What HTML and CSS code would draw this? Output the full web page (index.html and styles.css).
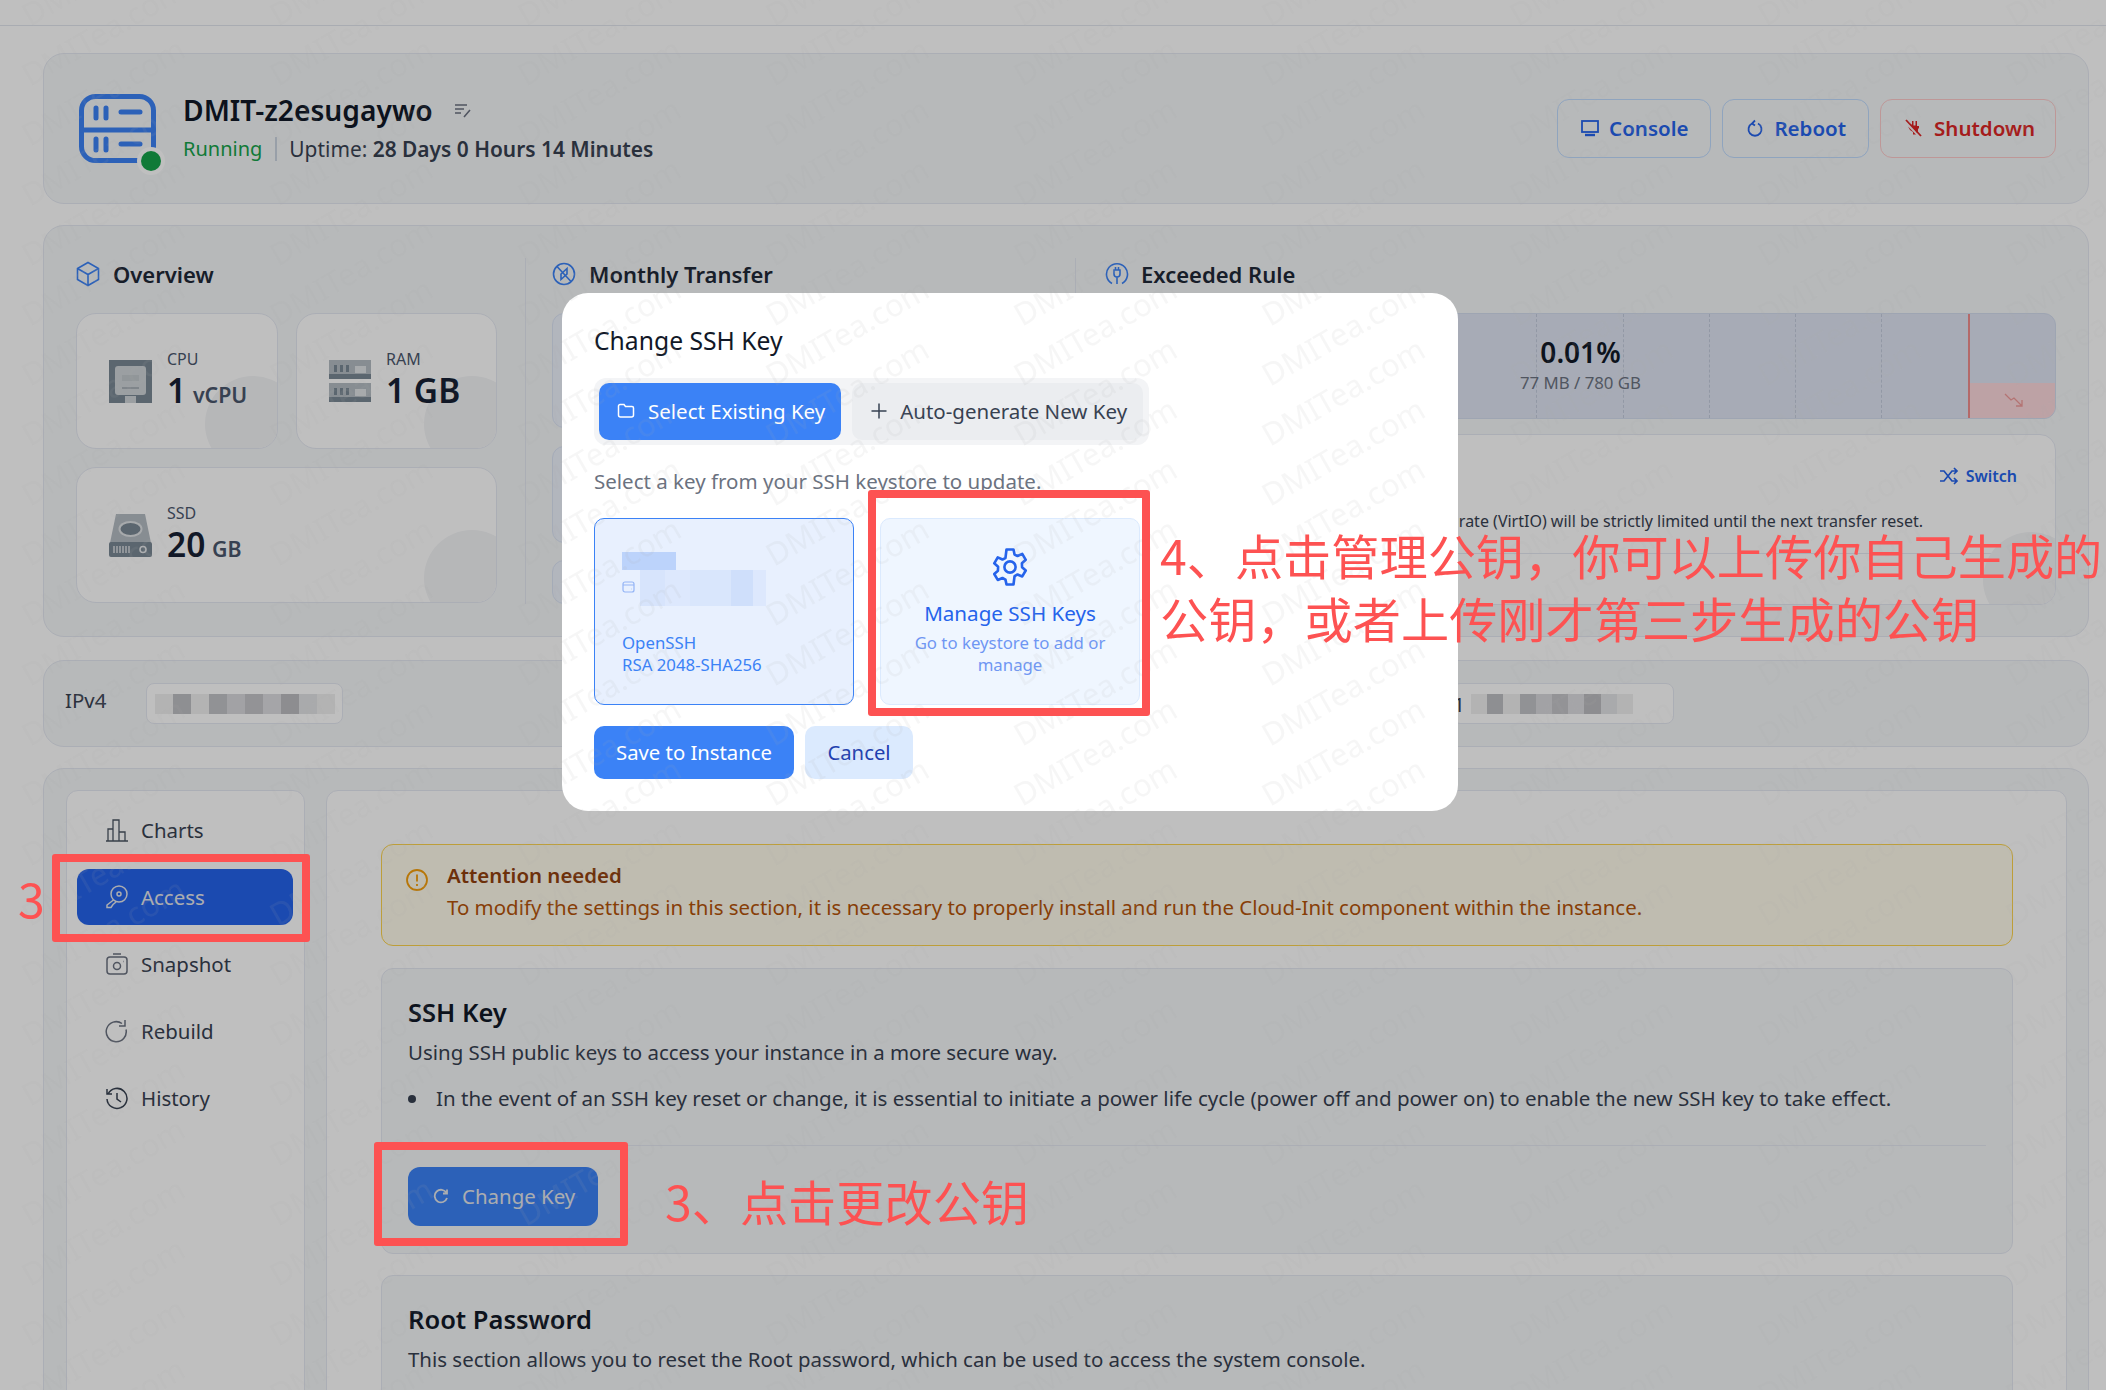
FILE: index.html

```html
<!DOCTYPE html>
<html lang="en">
<head>
<meta charset="utf-8">
<title>DMIT-z2esugaywo</title>
<link rel="stylesheet" href="styles.css">
</head>
<body>
<div class="page">
  <div class="topbar"></div>

  <section class="card head">
    <div class="logo">
      <svg width="77" height="69" viewBox="0 0 77 69" fill="none" stroke="#3b82f6" stroke-width="5" stroke-linecap="round">
        <rect x="2.5" y="2.5" width="72" height="64" rx="14"/>
        <path d="M2.5 36h72M17 14v10M27 14v10M42 18h19M17 45v11M27 45v11M42 50h19"/>
      </svg>
      <span class="logo-dot"></span>
    </div>
    <div class="head-info">
      <div class="name-row">
        <span class="name">DMIT-z2esugaywo</span>
        <svg class="edit" width="20" height="20" viewBox="0 0 20 20" fill="none" stroke="#6b7280" stroke-width="1.6"><path d="M2 5h12M2 9h9M2 13h6M11 17l6-7"/></svg>
      </div>
      <div class="status-row">
        <span class="running">Running</span>
        <span class="status-sep"></span>
        <span class="uptime">Uptime: <b>28 Days 0 Hours 14 Minutes</b></span>
      </div>
    </div>
    <div class="head-actions">
      <button class="act act-blue">
        <svg width="18" height="18" viewBox="0 0 18 18" fill="none" stroke="#2563eb" stroke-width="1.8"><rect x="1" y="2" width="16" height="11"/><path d="M4 16h10" stroke-width="2.4"/></svg>
        Console
      </button>
      <button class="act act-blue">
        <svg width="18" height="18" viewBox="0 0 18 18" fill="none" stroke="#2563eb" stroke-width="1.8"><path d="M6 4.500a6.500 6.500 0 1 0 6 0M9 1.500l-3 3 3 2"/></svg>
        Reboot
      </button>
      <button class="act act-red">
        <svg width="20" height="20" viewBox="0 0 20 20"><path d="M6 5l2 2V3h1.500v4.500h2V3H13v5h2v2l-1 1v3l-1 1zM4 8.500l8 8H9v-2.500L6 12z" fill="#dc2626"/><path d="M2 2l15 16" stroke="#dc2626" stroke-width="1.800"/></svg>
        Shutdown
      </button>
    </div>
  </section>

  <section class="card overview">
    <div class="col col-overview">
      <h3 class="col-title">
        <svg width="24" height="26" viewBox="0 0 24 26" fill="none" stroke="#3b82f6" stroke-width="1.600"><path d="M12 1.500l10.500 6v11l-10.500 6-10.500-6v-11zM1.500 7.500L12 13.500l10.500-6M12 13.500v11"/></svg>
        Overview
      </h3>
      <div class="stats">
        <div class="stat">
          <svg width="43" height="43" viewBox="0 0 43 43"><rect width="43" height="43" fill="#7a8894"/><rect x="6" y="6" width="31" height="29" rx="3" fill="#cfd4d8"/><rect x="13" y="27" width="17" height="2" fill="#aab2b8"/><rect x="16" y="36" width="11" height="7" fill="#cfd4d8"/><rect x="13" y="15" width="17" height="6" fill="#c2c8cd"/></svg>
          <div class="stat-text"><div class="stat-label">CPU</div><div class="stat-value">1 <small>vCPU</small></div></div>
        </div>
        <div class="stat">
          <svg width="42" height="43" viewBox="0 0 42 43"><g id="ramstick"><rect width="42" height="14" fill="#b4bcc3"/><rect y="14" width="42" height="5" fill="#7a8894"/><rect x="5" y="5" width="3" height="7" fill="#7a8894"/><rect x="11" y="5" width="3" height="7" fill="#7a8894"/><rect x="17" y="5" width="3" height="7" fill="#7a8894"/><rect x="26" y="6" width="11" height="7" fill="#dfe3e6"/></g><use href="#ramstick" y="23"/></svg>
          <div class="stat-text"><div class="stat-label">RAM</div><div class="stat-value">1 GB</div></div>
        </div>
        <div class="stat stat-wide">
          <svg width="43" height="43" viewBox="0 0 43 43"><path d="M7 0h29l6 29H1z" fill="#b4bcc3"/><ellipse cx="21.500" cy="15" rx="12" ry="8" fill="#dfe3e6"/><ellipse cx="21.500" cy="15" rx="10" ry="6" fill="#7a8894"/><rect y="28" width="43" height="15" rx="2" fill="#7a8894"/><path d="M5 32v7M8 32v7M11 32v7M14 32v7M17 32v7M20 32v7" stroke="#e6e9eb" stroke-width="1.300"/><circle cx="34" cy="35.500" r="3" fill="none" stroke="#e6e9eb" stroke-width="1.600"/></svg>
          <div class="stat-text"><div class="stat-label">SSD</div><div class="stat-value">20 <small>GB</small></div></div>
        </div>
      </div>
    </div>

    <div class="col col-transfer">
      <h3 class="col-title">
        <svg width="24" height="24" viewBox="0 0 24 24" fill="none" stroke="#3b82f6" stroke-width="1.600"><circle cx="12" cy="12" r="10.500"/><path d="M5 4.500l14 15M8.500 12.500l6.500-6v6M15.500 11.500l-6.500 6v-6"/></svg>
        Monthly Transfer
      </h3>
      <div class="peek peek-1"></div>
      <div class="peek peek-2"></div>
      <div class="peek peek-3"></div>
    </div>

    <div class="col col-rule">
      <h3 class="col-title">
        <svg width="24" height="24" viewBox="0 0 24 24" fill="none" stroke="#3b82f6" stroke-width="1.600"><path d="M7 21.500a10.500 10.500 0 1 1 10 0"/><path d="M9 8v4a3 3 0 0 0 6 0V8zM10.500 5v3M13.500 5v3M12 15v7" /></svg>
        Exceeded Rule
      </h3>
      <div class="gauge">
        <div class="gauge-seg"></div><div class="gauge-seg"></div><div class="gauge-seg"></div><div class="gauge-seg"></div><div class="gauge-seg"></div><div class="gauge-seg"></div><div class="gauge-seg"></div><div class="gauge-seg"></div><div class="gauge-seg"></div><div class="gauge-seg"></div>
        <div class="gauge-limit">
          <svg width="20" height="16" viewBox="0 0 20 16" fill="none" stroke="#f09a9a" stroke-width="1.300"><path d="M1 2l6 6 3-2 8 8M18 8v6h-6"/></svg>
        </div>
        <div class="gauge-text"><b>0.01%</b><span>77 MB / 780 GB</span></div>
      </div>
      <div class="rule">
        <span class="circle"></span>
        <div class="rule-switch">
          <svg width="20" height="18" viewBox="0 0 20 18" fill="none" stroke="#2563eb" stroke-width="1.700"><path d="M1 4h4l8 10h5M1 14h4l8-10h5M15 1l3 3-3 3M15 11l3 3-3 3"/></svg>
          Switch
        </div>
        <p class="rule-text">Beyond this limit, the network rate (VirtIO) will be strictly limited until the next transfer reset.</p>
        <div class="rule-line"></div>
      </div>
    </div>
  </section>

  <section class="card ips">
    <span class="ip-label">IPv4</span>
    <div class="ip-box"><span class="mosaic"></span></div>
    <div class="ip-box ip-box-2">1<span class="mosaic mosaic-2"></span></div>
  </section>

  <section class="card main">
    <nav class="side">
      <a class="side-item">
        <svg width="24" height="24" viewBox="0 0 24 24" fill="none" stroke="#4b5563" stroke-width="1.300"><path d="M1 23h22M3 23V11h5v12M8 23V2h6v21M14 23v-9h6v9"/></svg>
        Charts
      </a>
      <a class="side-item active">
        <svg width="24" height="24" viewBox="0 0 24 24" fill="none" stroke="#e5e7eb" stroke-width="1.500"><circle cx="14" cy="9" r="8"/><circle cx="14" cy="9" r="2"/><path d="M8.500 15L2 20v2.500h4l2-3 3-2.500"/></svg>
        Access
      </a>
      <a class="side-item">
        <svg width="24" height="24" viewBox="0 0 24 24" fill="none" stroke="#6b7280" stroke-width="1.500"><rect x="2" y="5" width="20" height="17" rx="3"/><circle cx="12" cy="14" r="3.500"/><path d="M8 2h8M18 9.500h.5"/></svg>
        Snapshot
      </a>
      <a class="side-item">
        <svg width="24" height="24" viewBox="0 0 24 24" fill="none" stroke="#6b7280" stroke-width="1.500"><path d="M17 4.500a10 10 0 1 0 4 6M20 1v6h-6"/></svg>
        Rebuild
      </a>
      <a class="side-item">
        <svg width="24" height="24" viewBox="0 0 24 24" fill="none" stroke="#374151" stroke-width="1.500"><path d="M3 8a10 10 0 1 1-1 5M2 3v5h5M12 7v6l4 3"/></svg>
        History
      </a>
    </nav>

    <div class="content">
      <div class="alert">
        <svg width="24" height="24" viewBox="0 0 24 24" fill="none" stroke="#f59e0b" stroke-width="1.800"><circle cx="12" cy="12" r="10"/><path d="M12 6.500v7M12 16v2"/></svg>
        <div>
          <div class="alert-title">Attention needed</div>
          <div class="alert-text">To modify the settings in this section, it is necessary to properly install and run the Cloud-Init component within the instance.</div>
        </div>
      </div>

      <div class="panel">
        <h4 class="panel-title">SSH Key</h4>
        <p class="panel-desc">Using SSH public keys to access your instance in a more secure way.</p>
        <ul class="panel-list">
          <li>In the event of an SSH key reset or change, it is essential to initiate a power life cycle (power off and power on) to enable the new SSH key to take effect.</li>
        </ul>
        <div class="panel-line"></div>
        <button class="change-btn">
          <svg width="16" height="16" viewBox="0 0 16 16" fill="none" stroke="#e5e7eb" stroke-width="1.800"><path d="M13.500 5A6.300 6.300 0 1 0 14 10M14 1.500V5.500h-4"/></svg>
          Change Key
        </button>
      </div>

      <div class="panel">
        <h4 class="panel-title">Root Password</h4>
        <p class="panel-desc">This section allows you to reset the Root password, which can be used to access the system console.</p>
      </div>
    </div>
  </section>
</div>

<div class="overlay"></div>

<div class="modal">
  <h2 class="modal-title">Change SSH Key</h2>
  <div class="tabs">
    <button class="tab tab-on">
      <svg width="18" height="18" viewBox="0 0 18 18" fill="none" stroke="#fff" stroke-width="1.500"><path d="M1.500 4a1.500 1.500 0 0 1 1.500-1.500h4l1.500 2h6.500a1.500 1.500 0 0 1 1.500 1.500v7a2 2 0 0 1-2 2h-11a2 2 0 0 1-2-2z"/></svg>
      Select Existing Key
    </button>
    <button class="tab">
      <svg width="18" height="18" viewBox="0 0 18 18" fill="none" stroke="#374151" stroke-width="1.500"><path d="M9 1.500v15M1.500 9h15"/></svg>
      Auto-generate New Key
    </button>
  </div>
  <p class="modal-desc">Select a key from your SSH keystore to update.</p>
  <div class="key-grid">
    <div class="key-card">
      <div class="key-mosaic">
        <svg width="13" height="12" viewBox="0 0 13 12" fill="none" stroke="#93b4f5" stroke-width="1.200"><rect x="1" y="1" width="11" height="10" rx="2"/><path d="M1 4h11M9 8h.5"/></svg>
      </div>
      <div class="key-meta">OpenSSH<br>RSA 2048-SHA256</div>
    </div>
    <div class="key-card key-manage">
      <svg width="42" height="42" viewBox="0 0 24 24" fill="none" stroke="#2563eb" stroke-width="1.500" stroke-linejoin="round"><path d="M10 2h4l.6 2.900 1.700.8 2.700-1.200 2 3.400-2.200 2 .1 2.200 2.100 1.900-2 3.400-2.700-1.100-1.700.9L14 22h-4l-.6-2.800-1.700-.9-2.700 1.100-2-3.400 2.100-1.900.1-2.200-2.200-2 2-3.400 2.700 1.200 1.700-.8z"/><circle cx="12" cy="12" r="3.200"/></svg>
      <div class="manage-title">Manage SSH Keys</div>
      <div class="manage-sub">Go to keystore to add or manage</div>
    </div>
  </div>
  <div class="modal-btns">
    <button class="btn-save">Save to Instance</button>
    <button class="btn-cancel">Cancel</button>
  </div>
</div>

<!-- watermark sits over both the page and the dialog -->
<svg class="watermark" width="2106" height="1390">
  <defs>
    <pattern id="wm" width="248" height="60" patternUnits="userSpaceOnUse">
      <g font-family="Noto Sans" font-size="31" fill="#aaaaaa" fill-opacity=".1">
        <text x="30" y="27" transform="rotate(-30 30 27)">DMITea.com</text>
        <text x="30" y="87" transform="rotate(-30 30 87)">DMITea.com</text>
        <text x="30" y="147" transform="rotate(-30 30 147)">DMITea.com</text>
        <text x="30" y="207" transform="rotate(-30 30 207)">DMITea.com</text>
      </g>
    </pattern>
  </defs>
  <rect width="2106" height="1390" fill="url(#wm)"/>
</svg>

<div class="mark mark-access"></div>
<div class="mark mark-change"></div>
<div class="mark mark-manage"></div>
<div class="note note-side">3</div>
<div class="note note-change">3、点击更改公钥</div>
<div class="note note-manage">4、点击管理公钥，你可以上传你自己生成的<br>公钥，或者上传刚才第三步生成的公钥</div>
</body>
</html>
```

FILE: styles.css

```css
* {
    box-sizing: border-box;
}
html, body {
    margin: 0;
    padding: 0;
    height: 1390px;
    overflow: hidden;
    background: #fff;
}
body {
    position: relative;
    font-family: "Noto Sans", "Noto Sans CJK SC", sans-serif;
    font-size: 20.45px;
    color: #374151;
}
button {
    font-family: inherit;
    cursor: pointer;
}
h2, h3, h4, p, ul {
    margin: 0;
    padding: 0;
}

.page {
    height: 1390px;
    padding: 0 17px 0 43px;
    overflow: hidden;
}
.topbar {
    height: 26px;
    margin: 0 -17px 0 -43px;
    border-bottom: 1px solid #e2e6ee;
}
.card {
    background: #f5f7f9;
    border: 1px solid #e5e9f2;
    border-radius: 21px;
}

/* header */
.head {
    display: flex;
    align-items: center;
    height: 151px;
    margin-top: 27px;
    padding: 0 32px 0 35px;
}
.logo {
    position: relative;
    width: 77px;
    height: 69px;
    margin-right: 27px;
}
.logo-dot {
    position: absolute;
    right: -5px;
    bottom: -8px;
    width: 20px;
    height: 20px;
    border-radius: 50%;
    background: #16a34a;
    box-shadow: 0 0 0 4px #fff;
}
.head-info {
    padding-bottom: 2px;
}
.name-row {
    display: flex;
    align-items: center;
    gap: 20px;
}
.name {
    font-size: 28.2px;
    line-height: 38px;
    font-weight: 600;
    color: #111827;
}
.status-row {
    display: flex;
    align-items: center;
    margin-top: 5px;
    line-height: 30px;
}
.running {
    font-size: 20px;
    color: #16a34a;
}
.status-sep {
    width: 2px;
    height: 24px;
    margin: 0 12px 0 13px;
    background: #cbd5e1;
}
.uptime {
    font-size: 20.9px;
}
.uptime b {
    font-weight: 600;
}
.head-actions {
    display: flex;
    gap: 11px;
    margin-left: auto;
}
.act {
    display: flex;
    align-items: center;
    justify-content: center;
    gap: 10px;
    height: 59px;
    padding: 0 22px 2px 23px;
    background: transparent;
    border-radius: 12px;
    font-size: 20.5px;
    font-weight: 600;
}
.act-blue {
    color: #2563eb;
    border: 1px solid #bfdbfe;
}
.act-red {
    padding-right: 20px;
    color: #dc2626;
    border: 1px solid #fecaca;
}

/* overview row */
.overview {
    display: flex;
    height: 412px;
    margin-top: 21px;
    padding: 32px;
}
.col {
    flex: none;
}
.col-title {
    display: flex;
    align-items: center;
    gap: 13px;
    height: 32px;
    font-size: 22px;
    font-weight: 600;
    color: #1f2937;
}
.col-overview {
    width: 450px;
    padding-right: 28px;
    border-right: 1px solid #e5e9f2;
}
.stats {
    display: grid;
    grid-template-columns: 202px 201px;
    grid-auto-rows: 136px;
    gap: 18px;
    margin-top: 23px;
}
.stat {
    position: relative;
    display: flex;
    align-items: center;
    gap: 15px;
    padding-left: 32px;
    background: #fff;
    border: 1px solid #e5e9f2;
    border-radius: 20px;
    overflow: hidden;
}
.stat::after, .circle {
    content: "";
    position: absolute;
    right: -24px;
    bottom: -24px;
    width: 96px;
    height: 96px;
    border-radius: 50%;
    background: #f3f4f6;
}
.stat-wide {
    grid-column: 1 / 3;
}
.stat-text {
    position: relative;
    z-index: 1;
    padding-bottom: 4px;
}
.stat-label {
    font-size: 16px;
    line-height: 22px;
}
.stat-value {
    font-size: 33.5px;
    line-height: 40px;
    font-weight: 600;
    color: #111827;
}
.stat-value small {
    margin-left: -2px;
    font-size: 21.33px;
    line-height: 1;
    color: #374151;
}
.col-transfer {
    width: 550px;
    padding: 0 29px 0 26px;
    border-right: 1px solid #e5e9f2;
}
.peek {
    background: #eef3fd;
    border: 1px solid #dbe4f5;
    border-radius: 12px;
}
.peek-1 {
    height: 115px;
    margin-top: 23px;
}
.peek-2 {
    height: 97px;
    margin-top: 18px;
}
.peek-3 {
    height: 44px;
    margin-top: 17px;
}
.col-rule {
    flex: 1;
    min-width: 0;
    padding-left: 29px;
}
.col-rule .col-title {
    gap: 12px;
}
.gauge {
    position: relative;
    display: flex;
    height: 106px;
    margin-top: 23px;
    background: #dfe5f3;
    border: 1px solid #d3dcee;
    border-radius: 12px;
    overflow: hidden;
}
.gauge-seg {
    flex: 1;
    border-right: 1px dashed #c3cbdc;
}
.gauge-limit {
    position: relative;
    flex: 1;
    border-left: 2px solid #f18c8c;
    margin-left: -1px;
}
.gauge-limit::before {
    content: "";
    position: absolute;
    left: 0;
    right: 0;
    bottom: 0;
    height: 35px;
    background: #fcd9dc;
}
.gauge-limit svg {
    position: absolute;
    left: 34px;
    bottom: 10px;
}
.gauge-text {
    position: absolute;
    left: 0;
    right: 0;
    top: 20px;
    display: flex;
    flex-direction: column;
    align-items: center;
}
.gauge-text b {
    font-size: 28px;
    line-height: 36px;
    font-weight: 600;
    color: #111827;
}
.gauge-text span {
    font-size: 16.8px;
    line-height: 26px;
    color: #6b7280;
}
.rule {
    position: relative;
    height: 171px;
    margin-top: 15px;
    background: #fff;
    border: 1px solid #e5e9f2;
    border-radius: 16px;
    overflow: hidden;
}
.rule-switch {
    display: flex;
    align-items: center;
    justify-content: flex-end;
    gap: 7px;
    height: 28px;
    margin: 27px 38px 0 0;
    font-size: 16px;
    font-weight: 600;
    color: #2563eb;
}
.rule-text {
    position: relative;
    margin: 20px 132px 0 0;
    font-size: 16px;
    line-height: 22px;
    text-align: right;
    white-space: nowrap;
}
.rule-line {
    height: 1px;
    margin-top: 21px;
    background: #e5e9f2;
}

/* ip row */
.ips {
    display: flex;
    align-items: center;
    height: 87px;
    margin-top: 23px;
    padding-left: 21px;
}
.ip-label {
    width: 81px;
    padding-bottom: 7px;
}
.ip-box {
    display: flex;
    align-items: center;
    width: 197px;
    height: 41px;
    padding-left: 8px;
    background: #fff;
    border: 1px solid #e5e9f2;
    border-radius: 8px;
}
.ip-box-2 {
    width: 222px;
    margin-left: 1109px;
    padding-left: 0;
    justify-content: flex-end;
    gap: 6px;
    padding-right: 40px;
}
.mosaic {
    display: block;
    width: 180px;
    height: 20px;
    background: linear-gradient(90deg, #efefef 0 10%, #bebfc3 10% 20%, #efefef 20% 30%, #c2c3c7 30% 40%, #d8d9dc 40% 50%, #c4c5c9 50% 60%, #dcdde0 60% 70%, #bcbdc1 70% 80%, #e2e3e6 80% 90%, #efefef 90%);
}
.mosaic-2 {
    width: 162px;
}

/* tabs area */
.main {
    display: flex;
    gap: 21px;
    height: 760px;
    margin-top: 21px;
    padding: 21px 21px 0 22px;
}
.side {
    display: flex;
    flex-direction: column;
    gap: 11px;
    width: 239px;
    padding: 11px 11px 0 10px;
    background: #fff;
    border: 1px solid #e5e9f2;
    border-radius: 12px 12px 0 0;
}
.side-item {
    display: flex;
    align-items: center;
    gap: 12px;
    height: 56px;
    padding-left: 28px;
    border-radius: 12px;
    color: #374151;
}
.side-item.active {
    background: #2563eb;
    color: #e5e7eb;
}
.content {
    flex: 1;
    padding: 53px 53px 0 54px;
    background: #fff;
    border: 1px solid #e5e9f2;
    border-radius: 12px 12px 0 0;
}
.alert {
    display: flex;
    align-items: flex-start;
    gap: 18px;
    height: 102px;
    padding: 14px 0 0 23px;
    background: #fffbeb;
    border: 1px solid #fcd34d;
    border-radius: 12px;
    line-height: 32px;
}
.alert svg {
    flex: none;
    margin-top: 9px;
}
.alert-title {
    font-weight: 600;
    color: #92400e;
}
.alert-text {
    color: #b45309;
}
.panel {
    margin-top: 22px;
    padding: 27px 26px 0 26px;
    background: #f5f7f9;
    border: 1px solid #e5e9f2;
    border-radius: 12px;
}
.panel + .panel {
    margin-top: 21px;
}
.panel:last-child {
    height: 200px;
}
.panel-title {
    font-size: 25.5px;
    line-height: 32px;
    font-weight: 600;
    color: #111827;
}
.panel-desc {
    margin-top: 8px;
    line-height: 32px;
}
.panel-list {
    margin-top: 14px;
    list-style: none;
    font-size: 20.55px;
    line-height: 32px;
}
.panel-list li {
    display: flex;
    gap: 20px;
}
.panel-list li::before {
    content: "";
    flex: none;
    width: 8px;
    height: 8px;
    margin-top: 13px;
    border-radius: 50%;
    background: #374151;
}
.panel-line {
    height: 1px;
    margin-top: 31px;
    background: #e5e9f2;
}
.change-btn {
    display: flex;
    align-items: center;
    gap: 13px;
    width: 190px;
    height: 59px;
    margin: 21px 0 27px;
    padding: 0 0 2px 25px;
    background: #3b82f6;
    border: 0;
    border-radius: 12px;
    color: #e5e7eb;
    font-size: 20.45px;
    white-space: nowrap;
}

.overlay {
    position: absolute;
    inset: 0;
    background: rgba(0, 0, 0, .25);
}

/* dialog */
.modal {
    position: absolute;
    left: 562px;
    top: 293px;
    width: 896px;
    height: 518px;
    padding: 32px;
    background: #fff;
    border-radius: 26px;
}
.modal-title {
    font-size: 24.7px;
    line-height: 32px;
    font-weight: 400;
    color: #111827;
}
.tabs {
    display: inline-flex;
    gap: 11px;
    margin-top: 21px;
    padding: 5px 6px 5px 5px;
    background: #f3f4f6;
    border-radius: 12px;
    vertical-align: top;
}
.tab {
    display: flex;
    align-items: center;
    gap: 12px;
    height: 57px;
    padding: 0 16px 2px 18px;
    background: #ebedf0;
    border: 0;
    border-radius: 10px;
    color: #374151;
    font-size: 20.5px;
    white-space: nowrap;
}
.tab-on {
    gap: 13px;
    background: #3b82f6;
    color: #fff;
}
.modal-desc {
    margin-top: 20px;
    font-size: 20.5px;
    line-height: 32px;
    color: #6b7280;
}
.key-grid {
    display: grid;
    grid-template-columns: 260px 260px;
    gap: 26px;
    margin-top: 21px;
}
.key-card {
    height: 187px;
    padding: 33px 27px 0;
    background: #e8f0fe;
    border: 1px solid #3b82f6;
    border-radius: 10px;
    font-size: 16.8px;
    line-height: 22px;
    color: #3b82f6;
}
.key-mosaic {
    width: 155px;
    height: 54px;
    padding-top: 29px;
    background: linear-gradient(#bcd3fb, #bcd3fb) 0 0 / 54px 18px no-repeat, linear-gradient(90deg, #d7e4fc 0 20%, #dde8fd 20% 40%, #d9e6fc 40% 72%, #cfdffb 72% 90%, #dde8fd 90%) 18px 18px / 126px 36px no-repeat;
    line-height: 0;
}
.key-meta {
    margin-top: 26px;
}
.key-manage {
    display: flex;
    flex-direction: column;
    align-items: center;
    padding: 27px 20px 0;
    background: #eff6ff;
    border-color: #dbeafe;
    text-align: center;
}
.manage-title {
    margin-top: 10px;
    font-size: 20.6px;
    line-height: 30px;
    color: #2563eb;
}
.manage-sub {
    margin-top: 4px;
    color: #6f97f3;
}
.modal-btns {
    display: flex;
    gap: 11px;
    margin-top: 21px;
}
.btn-save, .btn-cancel {
    height: 53px;
    padding-bottom: 2px;
    border: 0;
    border-radius: 10px;
    font-size: 20.3px;
}
.btn-save {
    width: 200px;
    background: #3b82f6;
    color: #fff;
}
.btn-cancel {
    width: 108px;
    background: #dbeafe;
    color: #1e40af;
}

.watermark {
    position: absolute;
    left: 0;
    top: 0;
    pointer-events: none;
}

/* red annotations drawn on top of the screenshot */
.mark {
    position: absolute;
    border: 8px solid #fd5252;
    border-radius: 3px;
}
.mark-access {
    left: 52px;
    top: 854px;
    width: 258px;
    height: 88px;
}
.mark-change {
    left: 374px;
    top: 1142px;
    width: 254px;
    height: 104px;
}
.mark-manage {
    left: 868px;
    top: 490px;
    width: 282px;
    height: 226px;
}
.note {
    position: absolute;
    font-family: "Noto Sans CJK SC", "Noto Sans", sans-serif;
    font-size: 48.2px;
    font-weight: 400;
    line-height: 63px;
    color: #fd5252;
    white-space: nowrap;
}
.note-side {
    left: 18px;
    top: 866px;
}
.note-change {
    left: 665px;
    top: 1169px;
}
.note-manage {
    left: 1160px;
    top: 523px;
}
```
